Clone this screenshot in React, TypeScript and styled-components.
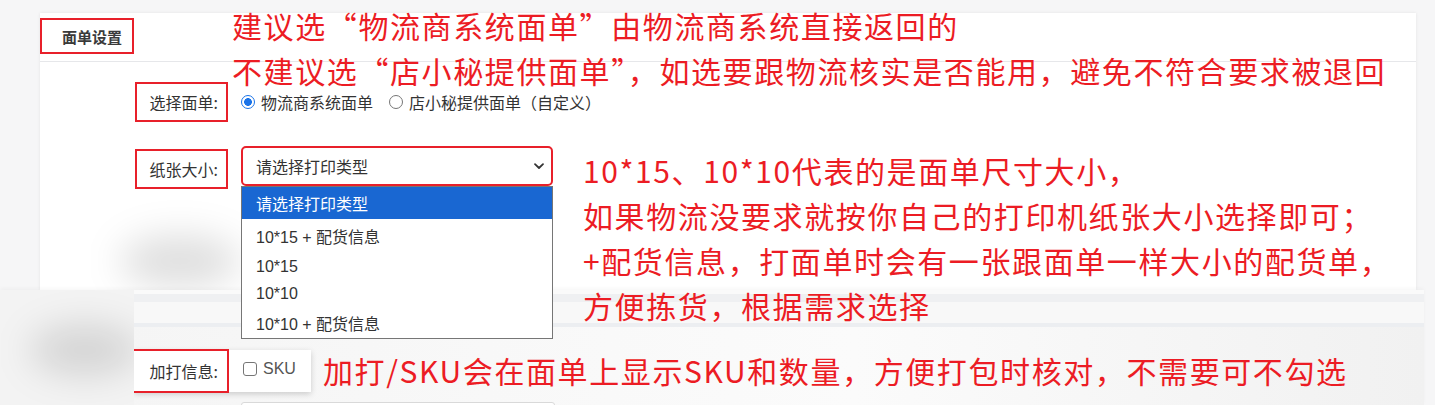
import styled, { createGlobalStyle } from 'styled-components';

const GlobalStyle = createGlobalStyle`
	html, body {
		margin: 0;
		padding: 0;
		background: #f6f6f7;
	}
	body {
		font-family: 'Liberation Sans', 'Noto Sans CJK SC', sans-serif;
		color: #333;
	}
`;

const Page = styled.div`
	position: relative;
	width: 1435px;
	height: 405px;
	overflow: hidden;
	padding-top: 13px;
	box-sizing: border-box;
	background: #f6f6f7;
`;

const Card = styled.div`
	position: relative;
	margin-left: 40px;
	width: 1376px;
	height: 277px;
	background: #fff;
	box-shadow: 0 0 3px rgba(0, 0, 0, 0.08);
`;

const Header = styled.div`
	height: 49px;
	box-sizing: border-box;
	padding-top: 5px;
	border-bottom: 1px solid #e6e7ea;
`;

const TitleBox = styled.div`
	width: 94px;
	height: 36px;
	box-sizing: border-box;
	border: 2px solid #e8202a;
	display: flex;
	align-items: center;
	padding-left: 20px;
	font-family: 'Noto Sans CJK SC', sans-serif;
	font-size: 15px;
	font-weight: 700;
	color: #3a3a3a;
`;

const Body = styled.div`
	padding: 20px 0 0 95px;
	display: flex;
	flex-direction: column;
	gap: 24px;
`;

const Row = styled.div`
	display: flex;
	align-items: flex-start;
`;

const Label = styled.div<{ $offset?: number }>`
	width: 93px;
	height: 40px;
	margin-top: ${(p) => p.$offset ?? 0}px;
	box-sizing: border-box;
	border: 2px solid #e8202a;
	display: flex;
	align-items: center;
	justify-content: flex-end;
	padding-right: 8px;
	font-family: 'Noto Sans CJK SC', sans-serif;
	font-size: 16px;
	color: #333;
	flex-shrink: 0;
`;

const Radios = styled.div`
	display: flex;
	align-items: center;
	height: 40px;
	margin-left: 13px;
	gap: 16px;
`;

const RadioItem = styled.label`
	display: flex;
	align-items: center;
	gap: 6px;
	font-family: 'Noto Sans CJK SC', sans-serif;
	font-size: 16px;
	color: #333;
`;

const RadioDot = styled.span<{ $checked?: boolean }>`
	width: 14px;
	height: 14px;
	box-sizing: border-box;
	border-radius: 50%;
	border: ${(p) => (p.$checked ? '1.5px solid #1a73e8' : '1px solid #767676')};
	background: ${(p) => (p.$checked ? 'radial-gradient(circle, #1a73e8 0 3.6px, #fff 4.1px)' : '#fff')};
`;

const SelectWrap = styled.div`
	position: relative;
	margin-left: 13px;
	width: 312px;
`;

const SelectBox = styled.div`
	height: 40px;
	box-sizing: border-box;
	border: 2px solid #e8202a;
	border-radius: 5px;
	display: flex;
	align-items: center;
	justify-content: space-between;
	padding: 0 6px 0 13px;
	font-family: 'Noto Sans CJK SC', sans-serif;
	font-size: 16px;
	color: #333;
`;

const Menu = styled.ul`
	position: absolute;
	top: 40px;
	left: 0;
	width: 312px;
	margin: 0;
	padding: 0;
	list-style: none;
	background: #fff;
	border: 1px solid #767676;
	box-sizing: border-box;
	z-index: 2;
`;

const MenuItem = styled.li<{ $active?: boolean; $h: number }>`
	height: ${(p) => p.$h}px;
	display: flex;
	align-items: center;
	padding-left: 14px;
	font-family: 'Liberation Sans', 'Noto Sans CJK SC', sans-serif;
	font-size: 16px;
	background: ${(p) => (p.$active ? '#1967d2' : '#fff')};
	color: ${(p) => (p.$active ? '#fff' : '#333')};
`;

const Note = styled.div<{ $top: number; $left: number }>`
	position: absolute;
	top: ${(p) => p.$top}px;
	left: ${(p) => p.$left}px;
	font-family: 'Noto Sans CJK SC', sans-serif;
	font-size: 30px;
	letter-spacing: 1.6px;
	line-height: 45px;
	color: #ec1c24;
	white-space: nowrap;
	z-index: 3;
`;

const Blob = styled.div<{ $top: number; $left: number; $w: number; $h: number }>`
	position: absolute;
	top: ${(p) => p.$top}px;
	left: ${(p) => p.$left}px;
	width: ${(p) => p.$w}px;
	height: ${(p) => p.$h}px;
	border-radius: 50%;
	background: rgba(0, 0, 0, 0.13);
	filter: blur(18px);
`;

const Lower = styled.div`
	position: relative;
	width: 1424px;
	height: 115px;
	display: grid;
	grid-template-columns: 134px 1fr;
	background: linear-gradient(90deg, #f4f4f4, #fbfbfb 60%, #f1f1f1);
	box-shadow: 0 -2px 4px rgba(0, 0, 0, 0.03);
`;

const LowerLeft = styled.div`
	position: relative;
	background: #f3f3f3;
	overflow: hidden;
`;

const LowerMain = styled.div`
	display: flex;
	flex-direction: column;
`;

const Strip = styled.div<{ $h: number; $bg: string }>`
	height: ${(p) => p.$h}px;
	background: ${(p) => p.$bg};
`;

const ExtraRow = styled.div`
	margin-top: 23px;
	width: 177px;
	height: 42px;
	background: #fff;
	box-shadow: 0 2px 6px rgba(0, 0, 0, 0.18);
	display: flex;
	align-items: center;
`;

const ExtraLabel = styled(Label)`
	margin-left: -2px;
	height: 44px;
	width: 97px;
	padding-right: 9px;
`;

const CheckItem = styled.label`
	display: flex;
	align-items: center;
	gap: 6px;
	margin-left: 14px;
	margin-top: -4px;
	font-size: 16px;
	color: #555;
`;

const CheckBox = styled.span`
	width: 14px;
	height: 14px;
	box-sizing: border-box;
	border: 1px solid #767676;
	border-radius: 3px;
	background: #fff;
`;

const InputEdge = styled.div`
	margin: 10px 0 0 107px;
	width: 312px;
	height: 20px;
	border: 1px solid #d9d9d9;
	border-radius: 3px;
	background: #fff;
`;

const Chevron = () => (
	<svg width="12" height="12" viewBox="0 0 12 12">
		<path d="M2 4.2 6 8l4-3.8" fill="none" stroke="#333" strokeWidth="1.8" strokeLinecap="round" strokeLinejoin="round" />
	</svg>
);

const options: [string, number][] = [
	['10*15 + 配货信息', 34],
	['10*15', 27],
	['10*10', 28],
	['10*10 + 配货信息', 30],
];

export default function App() {
	return (
		<>
			<GlobalStyle />
			<Page>
				<Card>
					<Header>
						<TitleBox>面单设置</TitleBox>
					</Header>
					<Body>
						<Row>
							<Label>选择面单:</Label>
							<Radios>
								<RadioItem>
									<RadioDot $checked />
									物流商系统面单
								</RadioItem>
								<RadioItem>
									<RadioDot />
									店小秘提供面单（自定义）
								</RadioItem>
							</Radios>
						</Row>
						<Row>
							<Label $offset={3}>纸张大小:</Label>
							<SelectWrap>
								<SelectBox>
									请选择打印类型
									<Chevron />
								</SelectBox>
								<Menu>
									<MenuItem $active $h={32}>
										请选择打印类型
									</MenuItem>
									{options.map(([o, h]) => (
										<MenuItem key={o} $h={h}>
											{o}
										</MenuItem>
									))}
								</Menu>
							</SelectWrap>
						</Row>
					</Body>
					<Blob $top={222} $left={80} $w={120} $h={52} />
				</Card>
				<Lower>
					<LowerLeft>
						<Blob $top={35} $left={30} $w={110} $h={50} />
					</LowerLeft>
					<LowerMain>
						<Strip $h={4} $bg="#fafafa" />
						<Strip $h={8} $bg="#eff0f2" />
						<Strip $h={21} $bg="#f8f8f8" />
						<Strip $h={4} $bg="#eceef1" />
						<ExtraRow>
							<ExtraLabel>加打信息:</ExtraLabel>
							<CheckItem>
								<CheckBox />
								SKU
							</CheckItem>
						</ExtraRow>
						<InputEdge />
					</LowerMain>
				</Lower>
				<Note $top={3} $left={232}>
					建议选“物流商系统面单”由物流商系统直接返回的
					<br />
					不建议选“店小秘提供面单”，如选要跟物流核实是否能用，避免不符合要求被退回
				</Note>
				<Note $top={148} $left={583}>
					10*15、10*10代表的是面单尺寸大小，
					<br />
					如果物流没要求就按你自己的打印机纸张大小选择即可；
					<br />
					+配货信息，打面单时会有一张跟面单一样大小的配货单，
					<br />
					方便拣货，根据需求选择
				</Note>
				<Note $top={348} $left={323}>
					加打/SKU会在面单上显示SKU和数量，方便打包时核对，不需要可不勾选
				</Note>
			</Page>
		</>
	);
}
